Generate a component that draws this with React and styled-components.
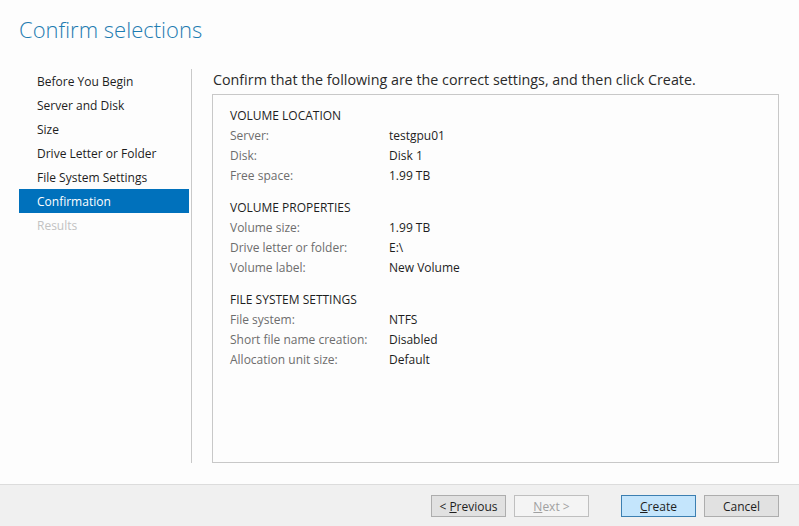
import React from "react";
import styled, { createGlobalStyle } from "styled-components";

const GlobalStyle = createGlobalStyle`
  html, body {
    margin: 0;
    padding: 0;
    height: 100%;
    background: #fdfdfd;
  }
  #root {
    height: 100%;
  }
`;

const Page = styled.div`
  height: 100vh;
  display: flex;
  flex-direction: column;
  font-family: "Open Sans", "Noto Sans", sans-serif;
  font-size: 12px;
  color: #1e1e1e;
  background: #fdfdfd;
`;

const Header = styled.div`
  height: 69px;
  box-sizing: border-box;
  padding: 13px 0 0 19px;
`;

const Title = styled.h1`
  margin: 0;
  font-size: 22px;
  font-weight: 300;
  line-height: 32px;
  color: #1d7cb1;
`;

const Main = styled.div`
  flex: 1;
  display: flex;
  min-height: 0;
  padding-bottom: 21px;
`;

const Nav = styled.ul`
  list-style: none;
  margin: 0 0 0 19px;
  padding: 0 2px 0 0;
  width: 170px;
  border-right: 1px solid #c9c9c9;
`;

const NavItem = styled.li`
  height: 24px;
  line-height: 26px;
  overflow: hidden;
  padding-left: 18px;
  white-space: nowrap;
  background: ${(p) => (p.$active ? "#0071bc" : "transparent")};
  color: ${(p) => (p.$active ? "#ffffff" : p.$disabled ? "#c2c2c2" : "#1e1e1e")};
`;

const Content = styled.div`
  flex: 1;
  display: flex;
  flex-direction: column;
  margin: 0 20px 0 20px;
`;

const Lead = styled.div`
  font-size: 14.3px;
  line-height: 19px;
  height: 24px;
  padding: 1px 0 0 1px;
  color: #2a2a2a;
  white-space: nowrap;
`;

const Box = styled.div`
  flex: 1;
  border: 1px solid #c8c8c8;
  padding: 11px 17px 9px;
`;

const Section = styled.div`
  margin-bottom: 12px;
`;

const SectionTitle = styled.div`
  line-height: 20px;
  color: #1e1e1e;
`;

const Row = styled.div`
  display: flex;
  line-height: 20px;
`;

const Label = styled.div`
  width: 159px;
  color: #6d6d6d;
`;

const Value = styled.div`
  color: #1e1e1e;
`;

const Footer = styled.div`
  height: 42px;
  box-sizing: border-box;
  border-top: 1px solid #dcdcdc;
  background: #f0f0f0;
  display: flex;
  justify-content: flex-end;
  align-items: flex-start;
  padding: 10px 20px 0 0;
  gap: 8px;
`;

const Button = styled.button`
  width: 75px;
  height: 22px;
  box-sizing: border-box;
  padding: 0;
  font-family: inherit;
  font-size: 12px;
  border: 1px solid ${(p) => (p.$primary ? "#3c7fb1" : p.disabled ? "#bfbfbf" : "#adadad")};
  background: ${(p) => (p.$primary ? "#c4e5fc" : p.disabled ? "#f4f4f4" : "#e1e1e1")};
  color: ${(p) => (p.disabled ? "#a0a0a0" : "#1e1e1e")};
  margin-left: ${(p) => (p.$gapBefore ? "24px" : "0")};

  u {
    text-decoration: underline;
  }
`;

const steps = [
  "Before You Begin",
  "Server and Disk",
  "Size",
  "Drive Letter or Folder",
  "File System Settings",
  "Confirmation",
  "Results",
];

const sections = [
  {
    title: "VOLUME LOCATION",
    rows: [
      ["Server:", "testgpu01"],
      ["Disk:", "Disk 1"],
      ["Free space:", "1.99 TB"],
    ],
  },
  {
    title: "VOLUME PROPERTIES",
    rows: [
      ["Volume size:", "1.99 TB"],
      ["Drive letter or folder:", "E:\\"],
      ["Volume label:", "New Volume"],
    ],
  },
  {
    title: "FILE SYSTEM SETTINGS",
    rows: [
      ["File system:", "NTFS"],
      ["Short file name creation:", "Disabled"],
      ["Allocation unit size:", "Default"],
    ],
  },
];

export default function App() {
  return (
    <Page>
      <GlobalStyle />
      <Header>
        <Title>Confirm selections</Title>
      </Header>
      <Main>
        <Nav>
          {steps.map((s, i) => (
            <NavItem key={s} $active={i === 5} $disabled={i === 6}>
              {s}
            </NavItem>
          ))}
        </Nav>
        <Content>
          <Lead>
            Confirm that the following are the correct settings, and then click Create.
          </Lead>
          <Box>
            {sections.map((sec) => (
              <Section key={sec.title}>
                <SectionTitle>{sec.title}</SectionTitle>
                {sec.rows.map(([l, v]) => (
                  <Row key={l}>
                    <Label>{l}</Label>
                    <Value>{v}</Value>
                  </Row>
                ))}
              </Section>
            ))}
          </Box>
        </Content>
      </Main>
      <Footer>
        <Button>
          &lt; <u>P</u>revious
        </Button>
        <Button disabled>
          <u>N</u>ext &gt;
        </Button>
        <Button $primary $gapBefore>
          <u>C</u>reate
        </Button>
        <Button>Cancel</Button>
      </Footer>
    </Page>
  );
}
